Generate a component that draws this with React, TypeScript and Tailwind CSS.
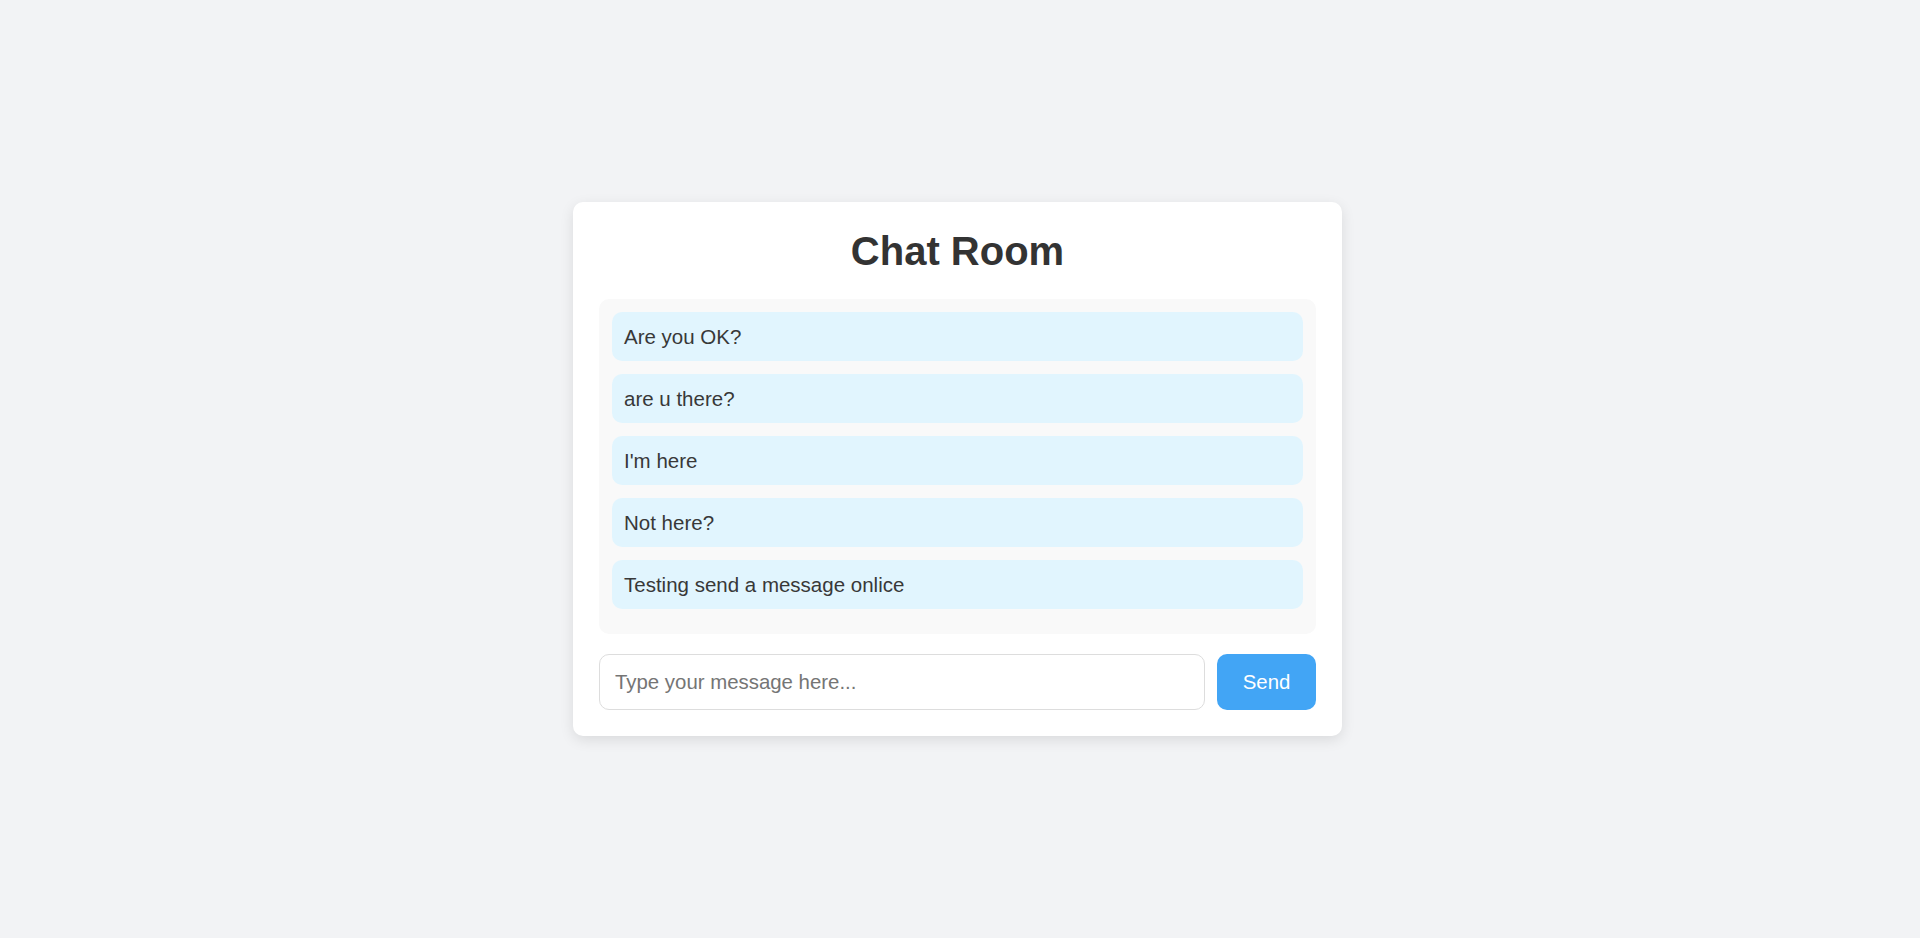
const messages = [
  "Are you OK?",
  "are u there?",
  "I'm here",
  "Not here?",
  "Testing send a message onlice",
];

export default function App() {
  return (
    <div
      className="flex min-h-[938px] items-center justify-center bg-[#f2f3f5] pr-[5px]"
      style={{ fontFamily: '"Liberation Sans", Arial, sans-serif' }}
    >
      <div className="w-[769px] rounded-[10px] bg-white px-[26px] pt-[26px] pb-[26px] shadow-[0_4px_14px_rgba(0,0,0,0.1)]">
        <h1 className="mb-[25px] text-center text-[40px] leading-[46px] font-bold text-[#333]">
          Chat Room
        </h1>
        <div className="rounded-[10px] bg-[#f9f9f9] p-[13px] pb-0">
          {messages.map((m) => (
            <div
              key={m}
              className="mb-[13px] rounded-[10px] bg-[#e1f5fe] px-[12px] py-[13px] text-[20.5px] leading-[23px] text-[#383838]"
            >
              {m}
            </div>
          ))}
          <div className="h-[12px]" />
        </div>
        <div className="mt-[20px] flex gap-[12px]">
          <input
            type="text"
            placeholder="Type your message here..."
            className="h-[56px] flex-1 rounded-[10px] border border-[#ddd] bg-white px-[15px] text-[20.4px] text-[#333] outline-none placeholder:text-[#757575]"
          />
          <button className="h-[56px] w-[99px] rounded-[10px] bg-[#42a5f5] text-[20.4px] text-white">
            Send
          </button>
        </div>
      </div>
    </div>
  );
}
